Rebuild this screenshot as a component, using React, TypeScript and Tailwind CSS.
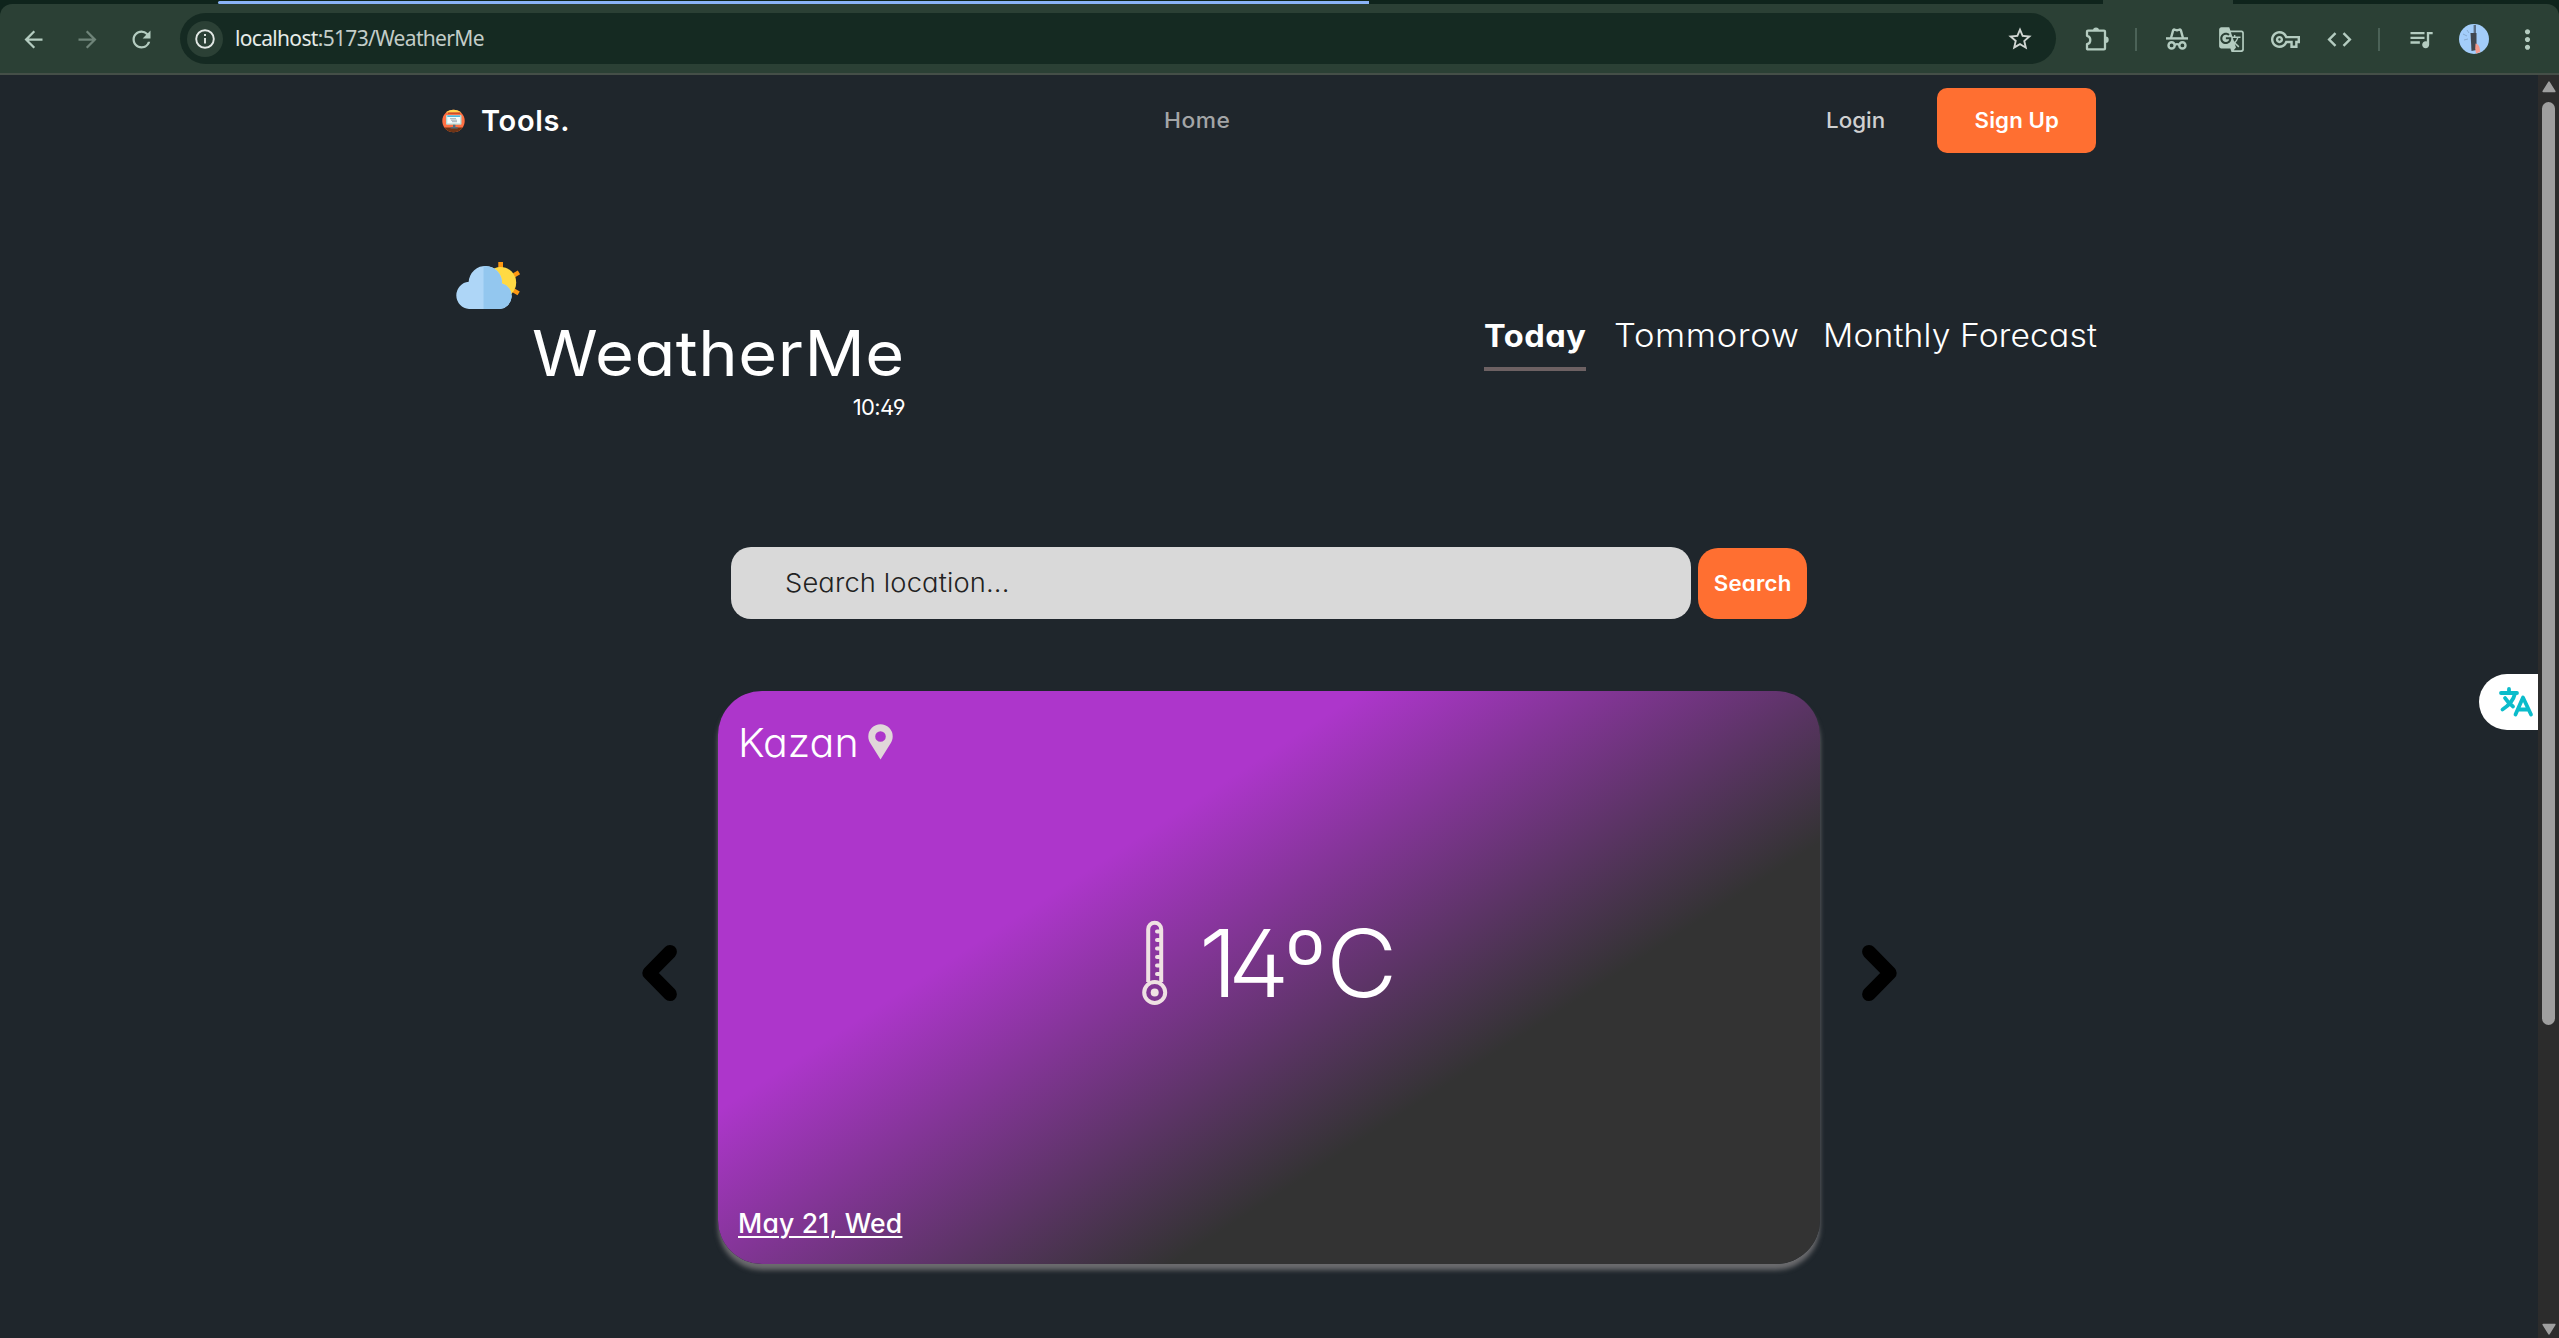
import type { ReactNode } from "react";
import { MdArrowBack, MdArrowForward, MdRefresh, MdStarBorder, MdGTranslate, MdOutlineVpnKey, MdCode, MdQueueMusic, MdMoreVert } from "react-icons/md";

const geometric = "font-['Inter',sans-serif] [font-feature-settings:'cv11','ss01'] whitespace-nowrap";

function PuzzleIcon() {
  return (
    <svg width="26" height="26" viewBox="0 0 26 26" fill="none">
      <path d="M3 5.6Q3 4.6 4 4.6H20Q21 4.6 21 5.6V22.4Q21 23.4 20 23.4H4Q3 23.4 3 22.4V18.2C7.4 17.6 7.4 10.4 3 9.8Z" stroke="#b4ccc0" strokeWidth="2.3" strokeLinejoin="round" />
      <path d="M9 4.4a3 3 0 0 1 6 0zM21.5 10.5a3 3 0 0 1 0 6.4z" fill="#b4ccc0" />
    </svg>
  );
}

function IncognitoIcon() {
  return (
    <svg width="24" height="24" viewBox="0 0 24 24" fill="none" stroke="#b4ccc0">
      <path d="M1 11.4H23" strokeWidth="2.4" />
      <path d="M6 11L8.2 3.2Q8.6 2.2 9.6 2.6L12 3.3L14.4 2.6Q15.4 2.2 15.8 3.2L18 11" strokeWidth="2.4" strokeLinejoin="round" />
      <circle cx="6.6" cy="18.4" r="3.1" strokeWidth="2.4" />
      <circle cx="17.4" cy="18.4" r="3.1" strokeWidth="2.4" />
      <path d="M9.6 18Q12 16.4 14.4 18" strokeWidth="2.2" />
    </svg>
  );
}

function Avatar() {
  return (
    <svg width="30" height="30" viewBox="0 0 30 30">
      <circle cx="15" cy="15" r="15" fill="#a3cdfa" />
      <rect x="14.6" y="1" width="2.4" height="9" fill="#5c6f86" />
      <path d="M11.5 9h6v17l-5 1z" fill="#414750" />
      <path d="M4 10l4 2M5 16l4-1M8 6l2 3" stroke="#7f9fc3" strokeWidth="0.8" />
      <path d="M16.5 19.500q3 .5 4 4l.8 4.500-4.300 1.500-.8-5z" fill="#f59a8d" />
    </svg>
  );
}

function ToolsLogo() {
  return (
    <svg width="24" height="24" viewBox="0 0 24 24">
      <defs><clipPath id="logo-disc"><circle cx="11.500" cy="12" r="11.2" /></clipPath></defs>
      <g clipPath="url(#logo-disc)">
        <rect width="24" height="24" fill="#ff7043" />
        <rect x="4" y="0" width="16" height="3.500" fill="#ffd54f" />
        <rect x="6" y="3.500" width="12" height="1.500" fill="#c94f2b" />
        <rect y="18.500" width="24" height="5.500" fill="#6d3416" />
        <rect x="4" y="6" width="15.500" height="9.800" rx="1" fill="#b8dcd6" />
        <rect x="5.300" y="7" width="12.900" height="7.400" fill="#f2fbfb" />
        <rect x="5.300" y="6.400" width="12.900" height="1.600" fill="#4fb3d9" />
        <path d="M8 9.700h6M9 11.200h6M10 12.700h5" stroke="#8d9aa3" strokeWidth="0.800" />
        <path d="M11 15.800h2.400v2.200h2.400v1.500H8.600V18H11z" fill="#546e7a" />
      </g>
    </svg>
  );
}

function CloudSun() {
  return (
    <svg width="66" height="48" viewBox="0 0 66 48" className="ml-[12.500px] block">
      <path d="M43.300 0h4.700v8h-4.700zM58 11.200l4.800-2.800 2.300 3.900-5 2.900zM59.500 26.400l5.300 3-2.300 3.900-5.500-3.200z" fill="#ff9811" />
      <circle cx="45.600" cy="20.600" r="15.600" fill="#ffda44" />
      <path d="M14 47A13.700 13.700 0 0 1 13.700 19.700A16.600 16.600 0 0 1 47 21.500A13 13 0 0 1 45 47Z" fill="#aed6f7" />
      <path d="M28.500 4.200H30.500A16.600 16.600 0 0 1 47 21.500A13 13 0 0 1 45 47H28.500Z" fill="#93c7ef" />
    </svg>
  );
}

function Pin() {
  return (
    <svg width="25" height="36" viewBox="0 0 25 36">
      <path fillRule="evenodd" d="M12.500 0.300A12.200 12.200 0 0 1 24.700 12.500C24.700 15.500 23.800 17.400 22.500 19.500L12.500 35.500L2.500 19.500C1.200 17.400 0.300 15.500 0.300 12.500A12.200 12.200 0 0 1 12.500 0.300ZM12.500 7.200a5.300 5.300 0 1 0 0 10.600a5.300 5.300 0 0 0 0-10.600Z" fill="#e0d7d9" />
    </svg>
  );
}

function Thermometer() {
  return (
    <svg width="26" height="86" viewBox="0 0 26 86" fill="none" stroke="#efe1e3" className="shrink-0">
      <path d="M6.200 62V9.200a6.500 6.500 0 0 1 13 0V62" strokeWidth="4" />
      <circle cx="12.700" cy="72.500" r="10.500" strokeWidth="4" />
      <circle cx="12.700" cy="72.500" r="4" fill="#efe1e3" stroke="none" />
      <path d="M15 11.500h3M15 20h3M15 28.500h3M15 37h3M15 45.500h3M15 54h3" strokeWidth="4" strokeLinecap="round" />
    </svg>
  );
}

function Chevron({ flip = false }: { flip?: boolean }) {
  return (
    <svg width="36" height="58" viewBox="0 0 36 58" className={flip ? "-scale-x-100" : ""}>
      <path d="M28 7.800L7.200 29L28 50.200" fill="none" stroke="#000" strokeWidth="13.800" strokeLinecap="round" strokeLinejoin="round" />
    </svg>
  );
}

function Slot({ w, children }: { w: string; children: ReactNode }) {
  return <div className={`${w} flex shrink-0 items-center justify-center`}>{children}</div>;
}

function BrowserBar() {
  return (
    <header className="h-[75px] bg-[#0f241c]">
      <div className="flex h-1 items-end">
        <div className="ml-[218px] h-[3px] w-[1151px] rounded-l bg-[#8ab4f8]" />
        <div className="ml-[734px] h-1 w-[130px] bg-[#2b4035]" />
      </div>
      <div className="flex h-[71px] items-start rounded-t-xl border-b-2 border-[#454f48] bg-[#2b4035] text-[#b4ccc0]">
        <div className="flex h-[70px] items-center">
          <Slot w="ml-[6px] w-[54px]"><MdArrowBack size={27} /></Slot>
          <Slot w="w-[54px]"><span className="text-[#6f8479]"><MdArrowForward size={27} /></span></Slot>
          <Slot w="w-[54px]"><MdRefresh size={27} /></Slot>
        </div>
        <div className="ml-[12px] mt-[9px] flex h-[51px] w-[1876px] items-center rounded-full bg-[#152a22]">
          <div className="ml-[7px] flex h-9 w-9 items-center justify-center rounded-full bg-[#2b4035]">
            <svg width="20" height="20" viewBox="0 0 20 20" fill="none" stroke="#e3e8e5" strokeWidth="1.900">
              <circle cx="10" cy="10" r="8.800" />
              <path d="M10 9v5.500M10 5v2" />
            </svg>
          </div>
          <div className="-mt-[2px] ml-[12px] w-[300px] whitespace-nowrap font-['Noto_Sans',sans-serif] text-[21px] leading-[28px] tracking-[-0.670px] text-[#c3cdc8]">
            <span className="text-[#e6ece8]">localhost</span>:5173/WeatherMe
          </div>
          <div className="ml-auto mr-[22px] text-[#d0d6d2]"><MdStarBorder size={28} /></div>
        </div>
        <div className="flex h-[70px] items-center">
          <Slot w="ml-[14px] w-[54px]"><PuzzleIcon /></Slot>
          <Slot w="w-[24px]"><span className="h-[23px] w-[2px] bg-[#4b6257]" /></Slot>
          <Slot w="ml-[2px] w-[54px]"><IncognitoIcon /></Slot>
          <Slot w="w-[54px]"><MdGTranslate size={27} /></Slot>
          <Slot w="w-[54px]"><MdOutlineVpnKey size={29} /></Slot>
          <Slot w="w-[54px]"><MdCode size={29} /></Slot>
          <Slot w="w-[26px]"><span className="h-[23px] w-[2px] bg-[#4b6257]" /></Slot>
          <Slot w="ml-[2px] w-[54px]"><MdQueueMusic size={28} /></Slot>
          <Slot w="w-[52px]"><Avatar /></Slot>
          <Slot w="w-[55px]"><MdMoreVert size={31} /></Slot>
        </div>
      </div>
    </header>
  );
}

function Scrollbar() {
  return (
    <div className="flex w-[21px] shrink-0 flex-col items-center bg-[#2c2c2c]">
      <svg width="14" height="12" viewBox="0 0 14 12" className="mt-[6px]"><path d="M7 1.200L12.800 10.500H1.200Z" fill="#9f9f9f" stroke="#9f9f9f" strokeWidth="1.600" strokeLinejoin="round" /></svg>
      <div className="mt-[9px] h-[923px] w-[13px] rounded-full bg-[#9f9f9f]" />
      <svg width="14" height="12" viewBox="0 0 14 12" className="mb-[3px] mt-auto"><path d="M7 10.800L12.800 1.500H1.200Z" fill="#9f9f9f" stroke="#9f9f9f" strokeWidth="1.600" strokeLinejoin="round" /></svg>
    </div>
  );
}

function Nav() {
  return (
    <nav className="mt-[13px] flex h-[65px] items-center">
      <ToolsLogo />
      <div className="ml-[15px] w-[683px] text-[29px] font-semibold leading-none tracking-[0.7px] text-white">Tools.</div>
      <div className="w-[662px] origin-left scale-x-[1.060] text-[21.500px] font-medium leading-none tracking-[0.500px] text-[#a3a5a7]">Home</div>
      <div className="w-[109px] origin-left scale-x-[1.040] text-[21.500px] font-medium leading-none text-[#cfd0d1]">Login</div>
      <button className="ml-auto flex h-[65px] w-[159px] items-center justify-center rounded-[10px] bg-[#ff6f31] text-[21px] font-semibold leading-none text-white">
        <span className="scale-x-[1.060] tracking-[0.100px]">Sign Up</span>
      </button>
    </nav>
  );
}

function Hero() {
  return (
    <section className="mt-[109px] flex justify-between text-white">
      <div className="w-[463px]">
        <CloudSun />
        <h1 className="ml-[90px] mt-[11px] origin-left scale-x-[1.060] text-[63px] leading-[64px] tracking-[0.500px]">WeatherMe</h1>
        <div className="mt-[11px] text-right text-[22px] leading-[22px] tracking-[-0.600px]">10:49</div>
      </div>
      <div className="mt-[58px] flex items-start text-[32px] font-light leading-[31px]">
        <div className="w-[102px] border-b-4 border-[#6d6163] pb-4 font-bold">
          <div className="origin-left scale-x-[1.050] text-[31px] tracking-[0.500px]">Today</div>
        </div>
        <div className="ml-[28px] w-[183px] origin-left scale-x-[1.080] tracking-[0.600px]">Tommorow</div>
        <div className="ml-[26px] w-[273px] origin-left scale-x-[1.050] tracking-[0.150px]">Monthly Forecast</div>
      </div>
    </section>
  );
}

export default function App() {
  return (
    <div className={`${geometric} flex h-[1338px] w-[2559px] flex-col overflow-hidden bg-[#1f262c]`}>
      <BrowserBar />
      <div className="relative flex grow">
        <main className="flex w-[2538px] flex-col px-[442px]">
          <Nav />
          <Hero />
          <div className="ml-[289px] mt-[129px] flex items-end gap-[7px]">
            <div className="flex h-[72px] w-[960px] items-center rounded-[20px] bg-[#d9d9d9] pl-[54px] text-[26px] font-light leading-none text-[#222]">
              <span className="origin-left scale-x-[1.050] tracking-[0.130px]">Search location...</span>
            </div>
            <button className="flex h-[71px] w-[109px] items-center justify-center rounded-[20px] bg-[#ff6f31] text-[21px] font-semibold leading-none text-white">
              <span className="scale-x-[1.060] tracking-[0.200px]">Search</span>
            </button>
          </div>
          <div className="ml-[200px] mt-[72px] flex items-center">
            <div className="-mt-[9px] w-[76px]"><Chevron /></div>
            <article className="flex h-[573px] w-[1102px] flex-col justify-between rounded-[44px] bg-[linear-gradient(147deg,#ad36cb_32.5%,#333_67.3%)] pl-5 text-white shadow-[0_6px_5px_#6b6b6e]">
              <div className="mt-[31px] flex h-[40px] items-center text-[40px] font-light leading-none">
                <span className="w-[129.500px] origin-left scale-x-[1.030] pt-px">Kazan</span>
                <Pin />
              </div>
              <div className="mb-[43px] flex h-[86px] items-center pl-[404px]">
                <Thermometer />
                <div className="ml-[31px] origin-left scale-x-[1.050] text-[93px] font-light leading-[86px]">
                  <span className="tracking-[-9px]">1</span>
                  <span className="tracking-[-5px]">4</span>
                  ºC
                </div>
              </div>
              <div className="mb-[25px] h-8 text-[26.500px] font-medium leading-8 tracking-[0.200px] underline decoration-2 underline-offset-[3px]">May 21, Wed</div>
            </article>
            <div className="-mt-[9px] ml-[41px]"><Chevron flip /></div>
          </div>
        </main>
        <div className="absolute left-[2479px] top-[599px] h-14 w-[59px] rounded-l-full bg-white">
          <svg width="36" height="32" viewBox="0 0 36 32" fill="none" stroke="#0bbccb" strokeWidth="3.800" strokeLinecap="round" strokeLinejoin="round" className="absolute left-[19px] top-[12px]">
            <path d="M3 7H19M11 3V7M17 7.500C15.500 14 10 20 4.500 23.500M7 12C9.500 16 12.500 18.500 15 20.500" />
            <path d="M17.500 28.500L25 11.500L33 28.500M20.500 23.500H30" />
          </svg>
        </div>
        <Scrollbar />
      </div>
    </div>
  );
}
